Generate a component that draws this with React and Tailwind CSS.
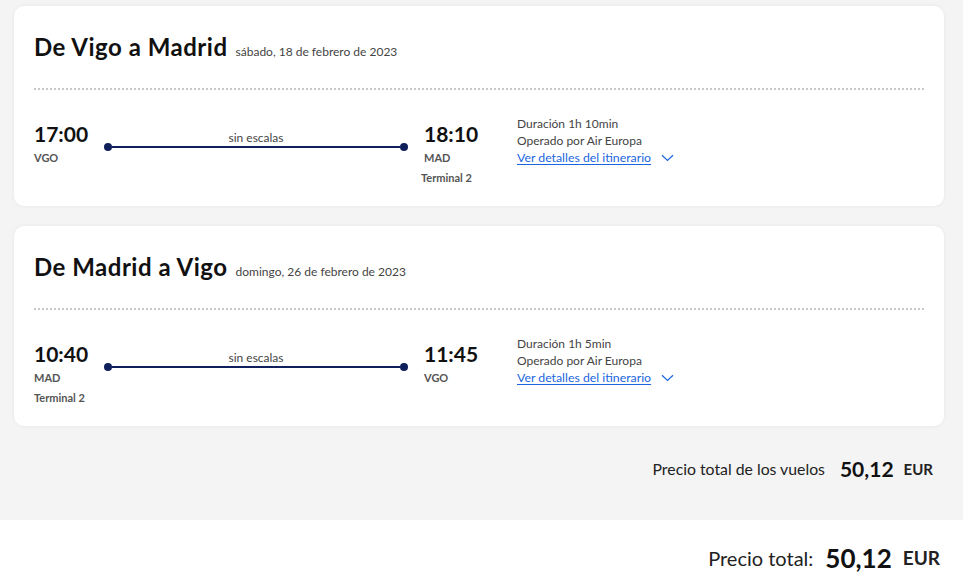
import React from "react";

const Chevron = () => (
  <svg width="13" height="8" viewBox="0 0 13 8" className="ml-[10px] mt-[1px]">
    <path d="M1 1.2 L6.5 6.5 L12 1.2" fill="none" stroke="#1a66e0" strokeWidth="1.2" />
  </svg>
);

function Card({ title, date, dep, arr, duration }) {
  return (
    <div className="h-[200px] rounded-[10px] bg-white px-5 pt-[26px] shadow-[0_0_4px_rgba(0,0,0,0.06)]">
      <div className="flex items-baseline h-[30px]">
        <span className="text-[24px] font-bold text-[#111] tracking-[0.5px] leading-[30px]">{title}</span>
        <span className="ml-[8px] text-[12px] text-[#444]">{date}</span>
      </div>
      <div className="mt-[26px] border-t-2 border-dotted border-[#c8c8c8]" />
      <div className="flex mt-[32px]">
        <div className="w-[70px] flex flex-col">
          <span className="text-[21px] font-bold text-[#111] leading-[24px]">{dep.time}</span>
          <span className="text-[11px] font-bold text-[#555] leading-[16px] mt-[4px]">{dep.code}</span>
          {dep.terminal && <span className="text-[11px] font-bold text-[#555] leading-[16px] mt-[4px]">{dep.terminal}</span>}
        </div>
        <div className="w-[304px] flex flex-col items-center">
          <span className="text-[12px] text-[#444] leading-[16px] mt-[8px]">sin escalas</span>
          <div className="w-full flex items-center -mt-[3px]">
            <div className="w-[8px] h-[8px] rounded-full bg-[#0e1f5b]" />
            <div className="flex-1 h-[1.5px] bg-[#0e1f5b]" />
            <div className="w-[8px] h-[8px] rounded-full bg-[#0e1f5b]" />
          </div>
        </div>
        <div className="w-[109px] pl-[16px] flex flex-col">
          <span className="text-[21px] font-bold text-[#111] leading-[24px]">{arr.time}</span>
          <span className="text-[11px] font-bold text-[#555] leading-[16px] mt-[4px]">{arr.code}</span>
          {arr.terminal && <span className="text-[11px] font-bold text-[#555] leading-[16px] mt-[4px] -ml-[3px]">{arr.terminal}</span>}
        </div>
        <div className="flex flex-col text-[12px] text-[#444] leading-[17px] -mt-[7px]">
          <span>Duración {duration}</span>
          <span>Operado por Air Europa</span>
          <span className="flex items-center">
            <span className="text-[12.3px] text-[#1a66e0] underline underline-offset-[2px]">Ver detalles del itinerario</span>
            <Chevron />
          </span>
        </div>
      </div>
    </div>
  );
}

export default function App() {
  return (
    <div className="w-[963px] h-[578px] bg-[#f4f4f4] flex flex-col" style={{ fontFamily: "Lato, 'Liberation Sans', sans-serif" }}>
      <div className="px-[14px] pt-[6px] flex flex-col gap-[20px] w-[958px]">
        <Card
          title="De Vigo a Madrid"
          date="sábado, 18 de febrero de 2023"
          dep={{ time: "17:00", code: "VGO" }}
          arr={{ time: "18:10", code: "MAD", terminal: "Terminal 2" }}
          duration="1h 10min"
        />
        <Card
          title="De Madrid a Vigo"
          date="domingo, 26 de febrero de 2023"
          dep={{ time: "10:40", code: "MAD", terminal: "Terminal 2" }}
          arr={{ time: "11:45", code: "VGO" }}
          duration="1h 5min"
        />
      </div>
      <div className="h-[94px] flex items-center justify-end pr-[30px] pb-[8px]">
        <span className="text-[15.8px] text-[#222]">Precio total de los vuelos</span>
        <span className="ml-[15px] text-[21px] font-bold text-[#111]">50,12</span>
        <span className="ml-[10px] text-[15px] font-bold text-[#222]">EUR</span>
      </div>
      <div className="flex-1 bg-white flex items-center justify-end pr-[23px] pt-[18px]">
        <span className="text-[20px] text-[#222]">Precio total:</span>
        <span className="ml-[12px] text-[26px] font-bold text-[#111]">50,12</span>
        <span className="ml-[11px] text-[19px] font-bold text-[#222]">EUR</span>
      </div>
    </div>
  );
}
